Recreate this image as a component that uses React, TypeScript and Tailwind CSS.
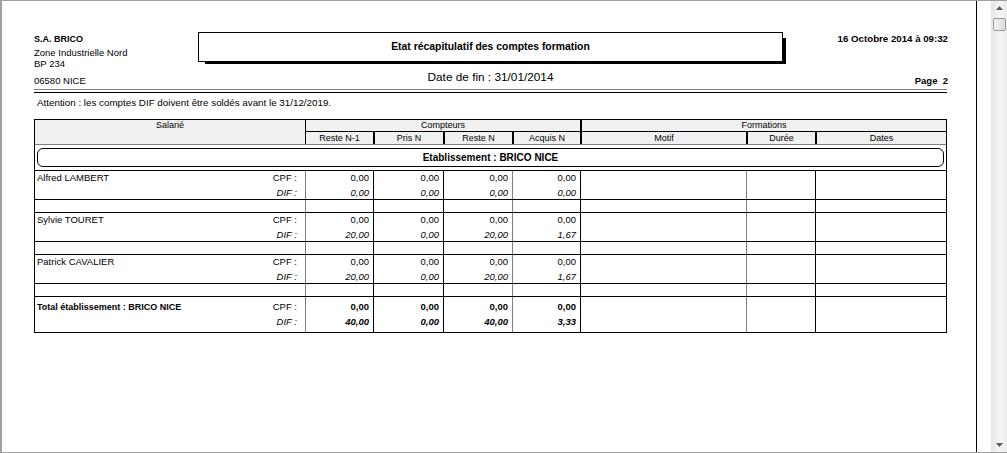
import React from 'react';

type Vals = [string, string, string, string];

const numCols = [
  'w-[68px] border-l border-[#808080]',
  'w-[70px] border-l border-black',
  'w-[69px] border-l border-black',
  'w-[68px] border-l border-[#808080]',
];
const restCols = [
  'w-[166px] border-l border-black',
  'w-[69px] border-l border-[#808080]',
  'w-[131px] border-l border-black',
];

function EmptyCells() {
  return (
    <>
      {numCols.map((c, i) => (
        <div key={'n' + i} className={c} />
      ))}
      {restCols.map((c, i) => (
        <div key={'r' + i} className={c} />
      ))}
    </>
  );
}

function DataRow({
  name,
  cpf,
  dif,
  total,
}: {
  name: string;
  cpf: Vals;
  dif: Vals;
  total?: boolean;
}) {
  return (
    <div className={total ? 'flex h-[35px]' : 'flex h-[28px]'}>
      <div
        className={
          total
            ? 'w-[270px] flex justify-between pt-[4px] pl-[2px] pr-[8px]'
            : 'w-[270px] flex justify-between pt-[1px] pl-[2px] pr-[8px]'
        }
      >
        <div className={total ? 'leading-[12px] font-bold text-[9px]' : 'leading-[12px]'}>{name}</div>
        <div className="flex flex-col items-end gap-[3px] leading-[12px]">
          <span>CPF :</span>
          <span className="italic">DIF :</span>
        </div>
      </div>
      {numCols.map((c, i) => (
        <div
          key={i}
          className={
            c +
            (total
              ? ' flex flex-col items-end gap-[3px] pt-[4px] pr-[4px] leading-[12px] font-bold'
              : ' flex flex-col items-end gap-[3px] pt-[1px] pr-[4px] leading-[12px]')
          }
        >
          <span>{cpf[i]}</span>
          <span className="italic">{dif[i]}</span>
        </div>
      ))}
      {restCols.map((c, i) => (
        <div key={'r' + i} className={c} />
      ))}
    </div>
  );
}

function Employee({ name, cpf, dif }: { name: string; cpf: Vals; dif: Vals }) {
  return (
    <div className="border-t border-black">
      <DataRow name={name} cpf={cpf} dif={dif} />
      <div className="flex h-[13px] border-t border-black">
        <div className="w-[270px]" />
        <EmptyCells />
      </div>
    </div>
  );
}

function Arrow({ down }: { down?: boolean }) {
  return (
    <svg width="7" height="4" viewBox="0 0 7 4" className="block">
      {down ? (
        <polygon points="0,0 7,0 3.5,4" fill="#5a5a5a" />
      ) : (
        <polygon points="3.5,0 7,4 0,4" fill="#5a5a5a" />
      )}
    </svg>
  );
}

export default function App() {
  return (
    <div className="w-[1007px] h-[453px] flex border-t border-b border-l-2 border-[#a0a0a0] bg-white text-black font-['Liberation_Sans',Arial,sans-serif] overflow-hidden">
      {/* page */}
      <div className="w-[975px] h-full border-r border-black pl-[32px] pt-[31px]">
        <div className="w-[914px]">
          {/* header */}
          <div className="flex h-[57px]">
            <div className="w-[164px] flex flex-col">
              <div className="mt-[2px] text-[9px] font-bold leading-[11px]">S.A. BRICO</div>
              <div className="mt-[2px] text-[9.5px] leading-[11px]">Zone Industrielle Nord</div>
              <div className="text-[9.5px] leading-[11px]">BP 234</div>
              <div className="mt-[6px] text-[9.5px] leading-[11px]">06580 NICE</div>
            </div>
            <div className="w-[588px] flex flex-col">
              <div className="w-[585px] h-[30px] border border-black bg-white shadow-[5px_4px_0_-2px_#000] flex items-center justify-center">
                <span className="text-[10.4px] font-bold leading-[12px]">Etat récapitulatif des comptes formation</span>
              </div>
              <div className="w-[585px] mt-[8px] text-center text-[11.8px] leading-[14px]">Date de fin : 31/01/2014</div>
            </div>
            <div className="flex-1 flex flex-col items-end">
              <div className="mt-[1px] text-[9.7px] font-bold leading-[11px]">16 Octobre 2014 à 09:32</div>
              <div className="mt-[31px] text-[9.5px] font-bold leading-[11px] whitespace-pre">Page  2</div>
            </div>
          </div>
          {/* double rule */}
          <div className="w-[913px] h-[4px] border-t border-b border-t-[#808080] border-b-black" />
          {/* attention */}
          <div className="h-[26px] pt-[4px] pl-[3px] text-[9.8px] leading-[12px]">
            Attention : les comptes DIF doivent être soldés avant le 31/12/2019.
          </div>
          {/* table */}
          <div className="w-[913px] border border-black text-[9.5px]">
            {/* head */}
            <div className="flex h-[25px] bg-[#f0f0f0] border-b border-[#808080] text-[9px]">
              <div className="w-[270px] text-center leading-[11px]">Salarié</div>
              <div className="w-[275px] border-l border-black flex flex-col">
                <div className="h-[11px] text-center leading-[11px]">Compteurs</div>
                <div className="flex h-[13px] border-t border-black leading-[12px] text-center">
                  <div className="w-[67px]">Reste N-1</div>
                  <div className="w-[70px] border-l-2 border-black">Pris N</div>
                  <div className="w-[69px] border-l-2 border-black">Reste N</div>
                  <div className="w-[68px] border-l-2 border-black">Acquis N</div>
                </div>
              </div>
              <div className="w-[366px] border-l-2 border-black flex flex-col">
                <div className="h-[11px] text-center leading-[11px]">Formations</div>
                <div className="flex h-[13px] border-t border-black leading-[12px] text-center">
                  <div className="w-[164px]">Motif</div>
                  <div className="w-[69px] border-l-2 border-black">Durée</div>
                  <div className="w-[131px] border-l-2 border-black">Dates</div>
                </div>
              </div>
            </div>
            {/* etablissement */}
            <div className="h-[25px] px-[2px] pt-[3px]">
              <div className="h-[19px] border border-black rounded-[6px] flex items-center justify-center">
                <span className="text-[10px] font-bold leading-[12px]">Etablissement : BRICO NICE</span>
              </div>
            </div>
            <Employee name="Alfred LAMBERT" cpf={['0,00', '0,00', '0,00', '0,00']} dif={['0,00', '0,00', '0,00', '0,00']} />
            <Employee name="Sylvie TOURET" cpf={['0,00', '0,00', '0,00', '0,00']} dif={['20,00', '0,00', '20,00', '1,67']} />
            <Employee name="Patrick CAVALIER" cpf={['0,00', '0,00', '0,00', '0,00']} dif={['20,00', '0,00', '20,00', '1,67']} />
            <div className="border-t border-black">
              <DataRow
                name="Total établissement : BRICO NICE"
                cpf={['0,00', '0,00', '0,00', '0,00']}
                dif={['40,00', '0,00', '40,00', '3,33']}
                total
              />
            </div>
          </div>
        </div>
      </div>
      {/* gap */}
      <div className="w-[14px] h-full bg-white" />
      {/* scrollbar */}
      <div className="w-[16px] h-full bg-gradient-to-r from-[#e3e3e3] via-[#f5f5f5] to-[#ececec] flex flex-col items-center">
        <div className="h-[16px] flex items-center justify-center pb-[3px]">
          <Arrow />
        </div>
        <div className="w-[13px] h-[13px] mt-[1px] border border-[#9a9a9a] rounded-[2px] bg-gradient-to-r from-[#f4f4f4] to-[#dcdcdc]" />
        <div className="flex-1" />
        <div className="h-[16px] flex items-center justify-center pt-[2px]">
          <Arrow down />
        </div>
      </div>
    </div>
  );
}
